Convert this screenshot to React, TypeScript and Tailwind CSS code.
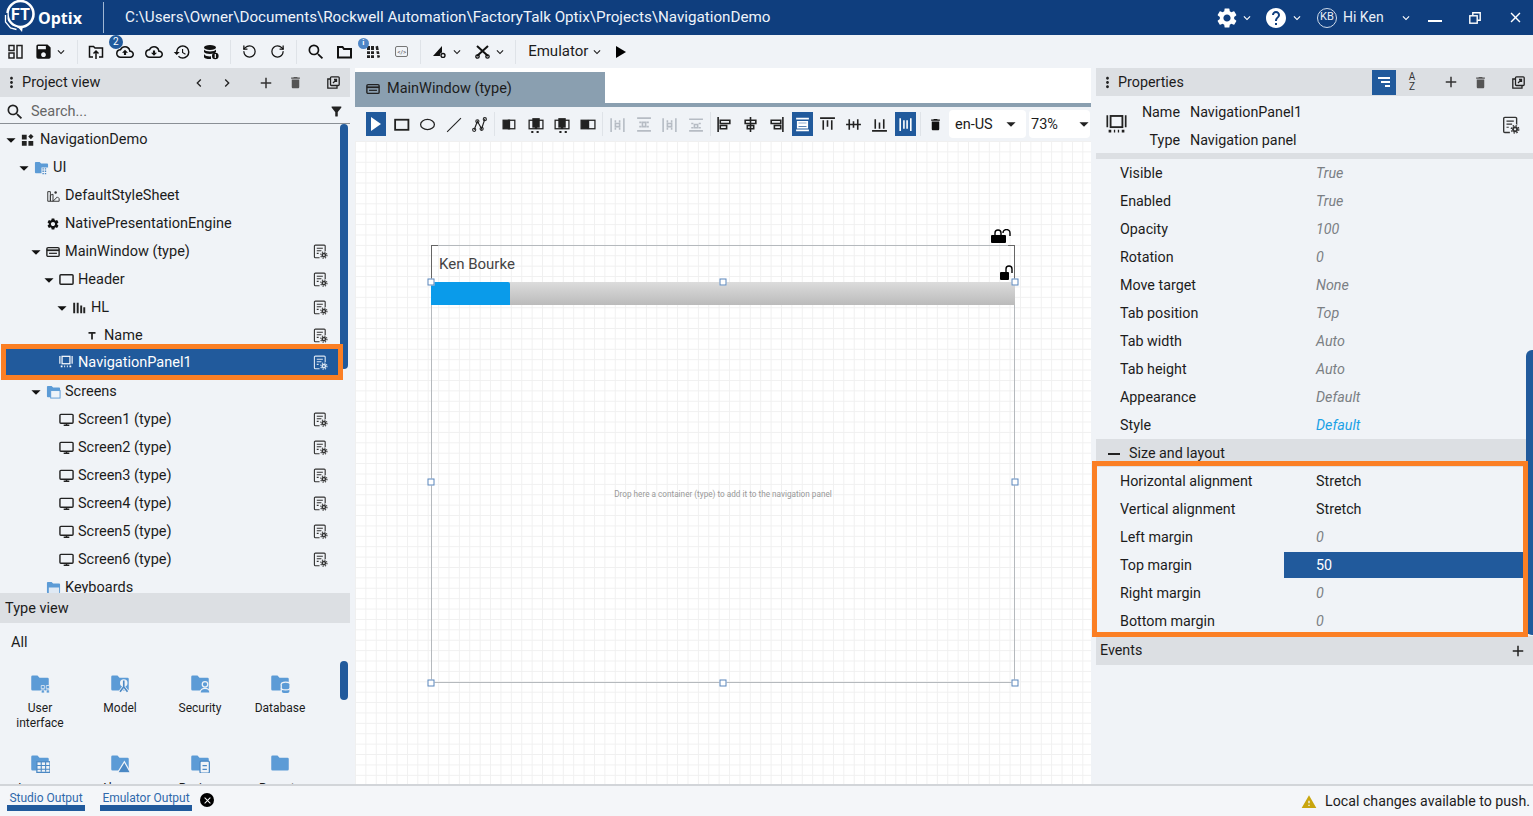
import React from "react";
import {
  MdSettings, MdHelp, MdSave, MdSearch, MdFilterAlt, MdAdd, MdClose,
  MdMoreVert, MdArrowDropDown, MdKeyboardArrowDown, MdChevronLeft, MdChevronRight, MdWarning,
  MdOutlineCloudUpload, MdOutlineCloudDownload, MdHistory, MdDelete,
} from "react-icons/md";
import { RotateCcw, RotateCw } from "lucide-react";

type P = { c?: string; s?: number };

const Svg = ({ s = 16, c = "#222", children, vb = "0 0 16 16" }: P & { children: React.ReactNode; vb?: string }) => (
  <svg width={s} height={s} viewBox={vb} fill="none" stroke={c} className="shrink-0">{children}</svg>
);

const Gear = ({ x, y, c, bg }: { x: number; y: number; c: string; bg: string }) => (
  <g>
    <circle cx={x} cy={y} r={4.4} fill={bg} stroke="none" />
    <circle cx={x} cy={y} r={2.6} fill={c} stroke="none" />
    <circle cx={x} cy={y} r={3.3} fill="none" stroke={c} strokeWidth="1.2" strokeDasharray="1.3 1.3" />
    <circle cx={x} cy={y} r={1} fill={bg} stroke="none" />
  </g>
);

const DocGear = ({ c = "#333", bg = "#f0f3f7", s = 15 }: P & { bg?: string }) => (
  <Svg s={s} c={c}>
    <path d="M13 8V2.2a1 1 0 0 0-1-1H2.500a1 1 0 0 0-1 1v11.500a1 1 0 0 0 1 1H7" strokeWidth="1.200" />
    <path d="M4 4.500h6.500M4 7.200h5M4 10h2" strokeWidth="1.100" />
    <Gear x={11.6} y={11.8} c={c} bg={bg} />
  </Svg>
);

const NavPanelIcon = ({ c = "#222", s = 14 }: P) => (
  <Svg s={s} c={c}>
    <rect x="3.500" y="1.500" width="9" height="8.500" strokeWidth="1.400" />
    <path d="M1 1v9M15 1v9" strokeWidth="1.300" />
    <path d="M2 13h2M6 13h1M9 13h1M12 13h2" strokeWidth="2" />
  </Svg>
);

const WindowIcon = ({ s = 14 }: P) => (
  <Svg s={s}>
    <rect x="1" y="3" width="14" height="10" rx="1.400" strokeWidth="1.600" />
    <path d="M1 6h14" strokeWidth="2" />
    <path d="M3.500 9.500h9" strokeWidth="1.400" />
  </Svg>
);

const Folder = ({ s = 16, children }: { s?: number; children?: React.ReactNode }) => (
  <Svg s={s}>
    <path d="M1 3a1 1 0 0 1 1-1h4l1.600 1.800H14a1 1 0 0 1 1 1V13a1 1 0 0 1-1 1H2a1 1 0 0 1-1-1Z" fill="#5c9bd6" stroke="none" />
    {children}
  </Svg>
);

const Caret = () => <span className="w-3 h-3 flex items-center justify-center mr-1 shrink-0"><MdArrowDropDown size={22} color="#111" className="shrink-0" /></span>;
const NoCaret = () => <span className="w-3 h-3 mr-1 shrink-0" />;

const treeIcons: Record<string, React.ReactNode> = {
  project: <Svg s={14}><path d="M1 2h5.500v5.500H1ZM1 9h5.500v5.500H1ZM8.500 9H14v5.500H8.500Z" fill="#222" stroke="none" /><path d="M11.300 1l3 3-3 3-3-3Z" fill="#222" stroke="none" /></Svg>,
  ui: <Folder s={15}><rect x="8" y="8" width="7.500" height="7.500" fill="#f0f3f7" stroke="none" /><path d="M9 9.500h1.500M11.500 9.500H13M9 12h1.500M11.500 12H13M9 14.500h1.500M11.500 14.500H13" stroke="#4b88c4" strokeWidth="1.500" /></Folder>,
  style: <Svg s={14} c="#333"><path d="M2 14V3h3v11ZM5 14V7l3-1v8ZM8 14l5-5 2 2v3Z" strokeWidth="1.100" /><circle cx="11" cy="4" r="1.400" fill="#333" stroke="none" /></Svg>,
  gear: <MdSettings size={16} color="#111" />,
  window: <WindowIcon />,
  rect: <Svg s={15}><rect x="1" y="3" width="14" height="10" rx="1" strokeWidth="1.600" /></Svg>,
  hl: <Svg s={14}><path d="M2.500 2v12M6.500 2v12M10.500 5v9M14 7v7" strokeWidth="2.200" /></Svg>,
  text: <Svg s={14}><path d="M4 4.500h8M8 4.500V12" strokeWidth="2" /></Svg>,
  nav: <NavPanelIcon c="#fff" />,
  screens: <Folder s={15}><rect x="5" y="7" width="10" height="8" fill="#eef3f9" stroke="#5c9bd6" /></Folder>,
  screen: <Svg s={15}><rect x="1" y="2.500" width="14" height="9.500" rx="1" strokeWidth="1.500" /><path d="M5 14.200h6M8 12v2" strokeWidth="1.500" /></Svg>,
  keyboards: <Folder s={15}><rect x="3" y="8" width="11" height="6" fill="#dfe9f4" stroke="none" /></Folder>,
};

const indent = ["pl-[5px]", "pl-[18px]", "pl-[30px]", "pl-[43px]", "pl-[56px]", "pl-[69px]"];

const treeRows = [
  { d: 0, caret: true, icon: "project", label: "NavigationDemo", doc: false },
  { d: 1, caret: true, icon: "ui", label: "UI", doc: false },
  { d: 2, caret: false, icon: "style", label: "DefaultStyleSheet", doc: false },
  { d: 2, caret: false, icon: "gear", label: "NativePresentationEngine", doc: false },
  { d: 2, caret: true, icon: "window", label: "MainWindow (type)", doc: true },
  { d: 3, caret: true, icon: "rect", label: "Header", doc: true },
  { d: 4, caret: true, icon: "hl", label: "HL", doc: true },
  { d: 5, caret: false, icon: "text", label: "Name", doc: true },
];
const treeRows2 = [
  { d: 2, caret: true, icon: "screens", label: "Screens", doc: false },
  { d: 3, caret: false, icon: "screen", label: "Screen1 (type)", doc: true },
  { d: 3, caret: false, icon: "screen", label: "Screen2 (type)", doc: true },
  { d: 3, caret: false, icon: "screen", label: "Screen3 (type)", doc: true },
  { d: 3, caret: false, icon: "screen", label: "Screen4 (type)", doc: true },
  { d: 3, caret: false, icon: "screen", label: "Screen5 (type)", doc: true },
  { d: 3, caret: false, icon: "screen", label: "Screen6 (type)", doc: true },
  { d: 2, caret: false, icon: "keyboards", label: "Keyboards", doc: false },
];

type Row = (typeof treeRows)[number];
const TreeRow = ({ r }: { r: Row }) => (
  <div className={`h-7 pt-[3px] flex items-center shrink-0 ${indent[r.d]}`}>
    {r.caret ? <Caret /> : <NoCaret />}
    <span className="w-[14px] mr-[5px] flex justify-center shrink-0">{treeIcons[r.icon]}</span>
    <span className="whitespace-nowrap pt-px">{r.label}</span>
    {r.doc && <span className="ml-auto mr-[22px]"><DocGear /></span>}
  </div>
);

const Sep = ({ cls }: { cls: string }) => <span className={`w-px h-6 bg-[#dfe3e8] shrink-0 ${cls}`} />;

const TB = ({ w, cls = "", children }: { w: string; cls?: string; children: React.ReactNode }) => (
  <span className={`flex items-center justify-center shrink-0 ${w} ${cls}`}>{children}</span>
);

const Chev = ({ c = "#222" }: { c?: string }) => <MdKeyboardArrowDown size={14} color={c} className="shrink-0" />;

/* ---- design toolbar icons ---- */
const Stack = ({ v }: { v: number }) => (
  <Svg s={17}>
    <rect x={v === 0 ? 7 : 2} y="4" width="6" height="8" fill={v === 3 ? "#222" : "#f0f3f7"} strokeWidth="1.200" />
    <rect x={v === 0 ? 2 : 9} y="4" width="6" height="8" fill={v === 0 ? "#222" : "#f0f3f7"} strokeWidth="1.200" />
    {(v === 1 || v === 2) && <path d={v === 1 ? "M4 15h2M9 15h2" : "M6 15h2M11 15h2"} strokeWidth="2" />}
    {(v === 1 || v === 2) && <rect x="5" y="2" width="7" height="9" fill="#222" stroke="none" />}
  </Svg>
);
const Dist = ({ d }: { d: string }) => (
  <Svg s={17} c="#b6bcc4"><path d={d} strokeWidth="1.500" /></Svg>
);
const Align = ({ d, c = "#222" }: { d: string; c?: string }) => (
  <Svg s={17} c={c}><path d={d} strokeWidth="1.500" /></Svg>
);

const designA = [
  <Svg s={17} key="r"><rect x="2" y="3.500" width="12.500" height="9.500" strokeWidth="1.700" /></Svg>,
  <Svg s={17} key="e"><ellipse cx="8" cy="8" rx="6.500" ry="4.800" strokeWidth="1.200" /></Svg>,
  <Svg s={17} key="l"><path d="M2 15 15 2" strokeWidth="1" /></Svg>,
  <Svg s={17} key="p"><path d="M3 13 6 5l4 7 3-9" strokeWidth="1.100" /><circle cx="3" cy="13" r="1.500" strokeWidth="1" /><circle cx="6" cy="5" r="1.500" strokeWidth="1" /><circle cx="10" cy="12" r="1.500" strokeWidth="1" /><circle cx="13" cy="3" r="1.500" strokeWidth="1" /></Svg>,
];
const designB = [0, 1, 2, 3].map((v) => <Stack v={v} key={v} />);
const designC = [
  "M2 2v13M14 2v13M6 4v2M10 4v2M6 11v2M10 11v2M6 7h4v3H6Z",
  "M2 2h13M2 14h13M4 6h2M11 6h2M4 10h2M11 10h2M7 6h3v4H7Z",
  "M2 2v13M14 2v13M6 4v2M10 4v2M6 11v2M10 11v2M6 7h4v3H6Z",
  "M2 3h13M2 14h13M4 7h2M11 7h2M4 11h2M11 11h2M7 8h3v3H7Z",
].map((d, i) => <Dist d={d} key={i} />);
const designD: { d: string; on?: boolean }[] = [
  { d: "M2 1v14M4 4h9v3H4ZM4 9h6v3H4Z" },
  { d: "M8 1v14M3 4h10v3H3ZM5 9h6v3H5Z" },
  { d: "M14 1v14M3 4h9v3H3ZM6 9h6v3H6Z" },
  { d: "M2 2.500h12M2 13.500h12M3.500 5.500h9v2h-9ZM3.500 9h9v2h-9Z", on: true },
  { d: "M1 2h14M4 4v9M8 4v6M12 4v9" },
  { d: "M1 8h14M4 3v10M8 5v6M12 3v10" },
  { d: "M1 14h14M4 3v9M8 6v6M12 3v9" },
  { d: "M3 2v12M13 2v12M6.500 4v8M9.500 4v8", on: true },
];

const SelectBox = ({ cls, caretCls, label }: { cls: string; caretCls: string; label: string }) => (
  <span className={`h-7 bg-white rounded-sm flex items-center shrink-0 ${cls}`}>
    <span className="pt-[2px]">{label}</span>
    <MdArrowDropDown size={22} color="#222" className={`ml-auto shrink-0 ${caretCls}`} />
  </span>
);

const propsA: { l: string; v: string; link?: boolean }[] = [
  { l: "Visible", v: "True" }, { l: "Enabled", v: "True" }, { l: "Opacity", v: "100" }, { l: "Rotation", v: "0" },
  { l: "Move target", v: "None" }, { l: "Tab position", v: "Top" }, { l: "Tab width", v: "Auto" }, { l: "Tab height", v: "Auto" },
  { l: "Appearance", v: "Default" }, { l: "Style", v: "Default", link: true },
];
const propsB: { l: string; v: string; plain?: boolean; sel?: boolean }[] = [
  { l: "Horizontal alignment", v: "Stretch", plain: true }, { l: "Vertical alignment", v: "Stretch", plain: true },
  { l: "Left margin", v: "0" }, { l: "Top margin", v: "50", sel: true }, { l: "Right margin", v: "0" }, { l: "Bottom margin", v: "0" },
];

const types: { a: string[]; icon: React.ReactNode }[] = [
  { a: ["User", "interface"], icon: <Folder s={20}><path d="M9 10h2.500v2.500H9ZM13 10h2.500v2.500H13ZM9 13.500h2.500V16H9ZM13 13.500h2.500V16H13Z" fill="#5c9bd6" stroke="#f0f3f7" strokeWidth=".6" /></Folder> },
  { a: ["Model"], icon: <Folder s={20}><circle cx="11" cy="8" r="3" fill="#f0f3f7" stroke="none" /><path d="M11 6v5M8 15l3-4 3 4" stroke="#f0f3f7" strokeWidth="2.400" /><path d="M11 6v5M8 15l3-4 3 4" stroke="#4b88c4" strokeWidth="1.300" /></Folder> },
  { a: ["Security"], icon: <Folder s={20}><circle cx="12" cy="9" r="2.200" fill="#5c9bd6" stroke="#f0f3f7" /><path d="M8 16c0-5 8-5 8 0Z" fill="#5c9bd6" stroke="#f0f3f7" /></Folder> },
  { a: ["Database"], icon: <Folder s={20}><ellipse cx="12.500" cy="9" rx="3.500" ry="1.800" fill="#5c9bd6" stroke="#f0f3f7" /><path d="M9 9v6c0 2 7 2 7 0V9" fill="#5c9bd6" stroke="#f0f3f7" /><path d="M9 12c0 2 7 2 7 0" stroke="#f0f3f7" /></Folder> },
  { a: ["Loggers"], icon: <Folder s={20}><rect x="5.500" y="7" width="10.500" height="8.500" fill="#f0f3f7" stroke="#4b88c4" /><path d="M5.500 10h10.500M5.500 13h10.500M9 7v8M12.500 7v8" stroke="#4b88c4" strokeWidth=".9" /></Folder> },
  { a: ["Alarms"], icon: <Folder s={20}><path d="M6 15.800 11.500 7l5 8.800Z" fill="#4b88c4" stroke="#f0f3f7" /></Folder> },
  { a: ["Recipes"], icon: <Folder s={20}><rect x="8" y="6.500" width="7.500" height="9.500" rx="1" fill="#f0f3f7" stroke="#4b88c4" /><path d="M10 10h3.500M10 13h3.500" stroke="#4b88c4" /></Folder> },
  { a: ["Reports"], icon: <Folder s={20} /> },
];

const Handle = ({ cls }: { cls: string }) => (
  <span className={`absolute w-[7px] h-[7px] bg-white border border-[#5a86bb] -translate-x-1/2 -translate-y-1/2 ${cls}`} />
);

const Lock = ({ wide, cls }: { wide?: boolean; cls: string }) => (
  <svg width={wide ? 21 : 14} height={wide ? 14 : 16} viewBox={wide ? "0 0 21 14" : "0 0 14 16"} className={`absolute ${cls}`}>
    {wide ? (
      <g><rect x="0" y="6" width="15" height="8" rx="1" fill="#000" /><path d="M4 6V4a3 3 0 0 1 6 0v2M12 4a3 3 0 0 1 7 0v3" fill="none" stroke="#000" strokeWidth="1.400" /></g>
    ) : (
      <g><rect x="0" y="7" width="9" height="8" rx="1" fill="#000" /><path d="M6 7V4a3 3 0 0 1 6 0v4" fill="none" stroke="#000" strokeWidth="1.400" /></g>
    )}
  </svg>
);

const Popout = ({ cls }: { cls: string }) => (
  <svg width="13" height="13" viewBox="0 0 13 13" fill="none" stroke="#222" strokeWidth="1.300" className={`shrink-0 ${cls}`}><rect x="3.500" y=".8" width="8.700" height="8.700" rx="1" /><path d="M3 3H.8v9.200H10V10" /><path d="M6 7l3.500-3.500M7 3.500h2.500V6" /></svg>
);

export default function App() {
  return (
    <div className="w-[1533px] h-[816px] overflow-hidden flex flex-col bg-[#f0f3f7] text-[#1c1c1c] text-[14.5px] font-[family-name:Roboto,sans-serif]">
      {/* Title bar */}
      <header className="h-[35px] shrink-0 bg-[#0f3e7e] text-white flex items-center">
        <svg width="34" height="35" viewBox="0 0 34 35" className="ml-[4px] shrink-0">
          <circle cx="16.500" cy="14" r="13" fill="none" stroke="#fff" strokeWidth="2.600" />
          <path d="M13 26l6 0-1 6Z" fill="#fff" />
          <path d="M2 13v8l5 6 6 2" fill="none" stroke="#0f3e7e" strokeWidth="3" />
          <path d="M1.500 15v7l5 6 6 1.500" fill="none" stroke="#fff" strokeWidth="1.300" />
          <text x="16.500" y="20" textAnchor="middle" fontSize="16" fontWeight="700" fill="#fff" fontFamily="Roboto, sans-serif">FT</text>
        </svg>
        <span className="w-[43px] text-[16px] font-bold font-[family-name:'Open_Sans',sans-serif]">Optix</span>
        <span className="ml-[22px] w-px h-[31px] bg-[#9fb6d3] shrink-0" />
        <span className="ml-[21px] text-[15.200px] text-[#eef3fa] whitespace-nowrap">C:\Users\Owner\Documents\Rockwell Automation\FactoryTalk Optix\Projects\NavigationDemo</span>
        <div className="ml-auto flex items-center text-[#e8eef6]">
          <MdSettings size={24} color="#fff" />
          <span className="ml-px"><Chev c="#fff" /></span>
          <span className="ml-[10px]"><MdHelp size={24} color="#fff" /></span>
          <span className="ml-[2px]"><Chev c="#fff" /></span>
          <span className="ml-[13px] w-[20px] h-[20px] rounded-full border border-[#cfdbea] flex items-center justify-center text-[11px]">KB</span>
          <span className="ml-[6px] text-[14px] w-[56px]">Hi Ken</span>
          <Chev c="#fff" />
          <span className="ml-[15px] w-[14px] h-[2px] bg-white mt-[7px]" />
          <span className="ml-[27px]">
            <svg width="12" height="12" viewBox="0 0 12 12" fill="none" stroke="#fff" strokeWidth="1.400" className="block"><rect x=".8" y="3.800" width="7.400" height="7.400" /><path d="M3.800 3.500V.8h7.400v7.400H8.500" /></svg>
          </span>
          <span className="ml-[26px] mr-[9px]"><MdClose size={17} color="#fff" /></span>
        </div>
      </header>

      {/* Main toolbar */}
      <div className="h-[33px] shrink-0 flex items-center">
        <TB w="w-[30px]"><svg width="15" height="15" viewBox="0 0 15 15" fill="none" stroke="#222" strokeWidth="1.500"><rect x="1" y="1.500" width="5" height="5" /><rect x="1" y="9" width="5" height="5" /><rect x="9" y="1.500" width="5" height="12.500" /></svg></TB>
        <TB w="w-[27px]"><MdSave size={19} color="#111" /></TB>
        <TB w="w-[8px]"><Chev /></TB>
        <Sep cls="ml-[12px]" />
        <TB w="w-[28.700px]" cls="ml-[4px]"><svg width="16" height="16" viewBox="0 0 16 16" fill="none" stroke="#111" strokeWidth="1.500"><path d="M5 13H1.500V2.500h4L7 4h7.500v9H11" /><path d="M8 15V7M5.500 9.500 8 7l2.500 2.500" /></svg></TB>
        <TB w="w-[28.700px]" cls="relative">
          <MdOutlineCloudUpload size={18} color="#111" />
          <span className="absolute -top-[8px] -left-[2px] w-[14px] h-[14px] rounded-full bg-[#215a9c] text-white text-[10px] flex items-center justify-center">2</span>
        </TB>
        <TB w="w-[28.700px]"><MdOutlineCloudDownload size={18} color="#111" /></TB>
        <TB w="w-[28.700px]"><MdHistory size={18} color="#111" /></TB>
        <TB w="w-[28.700px]"><svg width="16" height="16" viewBox="0 0 16 16"><ellipse cx="7" cy="3.500" rx="6" ry="2.500" fill="#111" /><path d="M1 5.500c1 2.500 11 2.500 12 0v2.500c-1 2.500-11 2.500-12 0ZM1 10c1 2.500 6 2.500 7 2.300V15c-3 .3-7-.5-7-2Z" fill="#111" /><circle cx="12.300" cy="12" r="3.300" fill="#111" /><path d="M12.300 10v4" stroke="#fff" strokeWidth="1.200" /></svg></TB>
        <Sep cls="ml-[5px]" />
        <TB w="w-[28px]" cls="ml-[4px]"><RotateCcw size={15} color="#111" strokeWidth={2} /></TB>
        <TB w="w-[28px]"><RotateCw size={15} color="#111" strokeWidth={2} /></TB>
        <Sep cls="ml-[5px]" />
        <TB w="w-[28.700px]" cls="ml-[4px]"><MdSearch size={20} color="#111" /></TB>
        <TB w="w-[28.700px]"><svg width="15" height="14" viewBox="0 0 15 14" fill="none" stroke="#111" strokeWidth="2"><path d="M1 12.500V2h4.500l1.500 2H14v8.500Z" /></svg></TB>
        <TB w="w-[28.700px]" cls="relative">
          <svg width="14" height="14" viewBox="0 0 14 14" fill="#222"><path d="M1 1h3v12H1ZM5 1h3v12H5ZM9.500 1.500l2.500-.7 2 11.500-2.500.7Z" /><path d="M0 5h14v1.200H0ZM0 9h14v1.200H0Z" fill="#f0f3f7" /></svg>
          <span className="absolute -top-[7px] -left-[1px] w-[11px] h-[11px] rounded-full bg-[#4f86c6] text-white text-[8px] font-bold flex items-center justify-center">i</span>
        </TB>
        <TB w="w-[28.700px]"><span className="w-[13px] h-[11px] border border-[#777] rounded-[2px] text-[6px] leading-[9px] text-center text-[#444]">&lt;/&gt;</span></TB>
        <Sep cls="ml-[4px]" />
        <TB w="w-[20px]" cls="ml-[8px]"><svg width="13" height="13" viewBox="0 0 13 13"><path d="M0 11 9 1v6.500a3 3 0 0 0-2 3.500Z" fill="#111" /><circle cx="10" cy="10.500" r="2" fill="none" stroke="#111" strokeWidth="1.400" /></svg></TB>
        <TB w="w-[10px]" cls="ml-[3px]"><Chev /></TB>
        <TB w="w-[20px]" cls="ml-[10px]"><svg width="15" height="15" viewBox="0 0 15 15" fill="none" stroke="#111" strokeWidth="2"><path d="M2 2l11 10M13 2 2 12" /><circle cx="2.500" cy="12.500" r="1.700" strokeWidth="1.300" /><circle cx="12.500" cy="12.500" r="1.700" strokeWidth="1.300" /></svg></TB>
        <TB w="w-[10px]" cls="ml-[3px]"><Chev /></TB>
        <Sep cls="ml-[10px]" />
        <span className="ml-[12px] w-[58px] whitespace-nowrap text-[15px]">Emulator</span>
        <TB w="w-[12px]" cls="ml-[5px]"><Chev /></TB>
        <TB w="w-[16px]" cls="ml-[10px]"><svg width="12" height="14" viewBox="0 0 12 14"><path d="M1 1l10 6-10 6Z" fill="#000" /></svg></TB>
      </div>

      <div className="flex-1 flex min-h-0">
        {/* Left column */}
        <aside className="w-[350px] shrink-0 flex flex-col min-h-0">
          <div className="h-[29px] shrink-0 bg-[#dcdfe3] flex items-center">
            <MdMoreVert size={17} color="#222" className="ml-[3px] shrink-0" />
            <span className="ml-[2px] w-[78px] whitespace-nowrap">Project view</span>
            <MdChevronLeft size={16} color="#222" className="ml-[91px] shrink-0" />
            <MdChevronRight size={16} color="#222" className="ml-[12px] shrink-0" />
            <MdAdd size={18} color="#333" className="ml-[22px] shrink-0" />
            <MdDelete size={15} color="#555" className="ml-[12.500px] shrink-0" />
            <Popout cls="ml-[24px]" />
          </div>
          <div className="h-[27px] pt-[3px] shrink-0 flex items-center border-b border-[#8a8f95]">
            <MdSearch size={20} color="#222" className="ml-[5px]" />
            <span className="ml-[6px] text-[#666]">Search...</span>
            <MdFilterAlt size={15} color="#222" className="ml-auto mr-[6px]" />
          </div>
          <div className="relative h-[469px] shrink-0 overflow-hidden flex flex-col">
            {treeRows.map((r) => <TreeRow key={r.label} r={r} />)}
            <div className="relative z-10 -my-1 ml-px w-[342px] h-9 shrink-0 border-[5px] border-[#fb7f24] bg-[#215a9c] text-white flex items-center pl-[37px]">
              <span className="w-3 mr-1 shrink-0" />
              <span className="w-[14px] mr-[5px] flex justify-center shrink-0">{treeIcons.nav}</span>
              <span className="pt-[2px]">NavigationPanel1</span>
              <span className="ml-auto mr-[10px]"><DocGear c="#dbe6f2" bg="#215a9c" /></span>
            </div>
            {treeRows2.map((r) => <TreeRow key={r.label} r={r} />)}
            <span className="absolute left-[340px] top-0 w-2 h-[245px] rounded-full bg-[#215a9c]" />
          </div>
          <div className="h-[30px] pt-[2px] shrink-0 bg-[#dcdfe3] flex items-center pl-[5px]">Type view</div>
          <div className="relative flex-1 min-h-0 overflow-hidden">
            <div className="pl-[11px] pt-[11px] h-[29px] leading-[18px]">All</div>
            <div className="grid grid-cols-[80px_80px_80px_80px] mt-[21px]">
              {types.map((t) => (
                <div key={t.a[0]} className="h-[80px] flex flex-col items-center text-[12px] leading-[15px] text-center">
                  <span className="h-[20px] mb-[8px]">{t.icon}</span>
                  {t.a.map((x) => <span key={x}>{x}</span>)}
                </div>
              ))}
            </div>
            <span className="absolute left-[340px] top-[38px] w-2 h-[39px] rounded-full bg-[#215a9c]" />
          </div>
        </aside>

        {/* Center */}
        <main className="ml-[5px] w-[736px] shrink-0 flex flex-col min-h-0">
          <div className="h-[39px] shrink-0 bg-white pt-[4px] border-b-4 border-[#8a9fb0] flex">
            <div className="w-[250px] bg-[#8a9fb0] flex items-center pl-[11px] pb-[2px] -mb-[4px]">
              <WindowIcon />
              <span className="ml-[7px]">MainWindow (type)</span>
            </div>
          </div>
          <div className="h-[34px] shrink-0 flex items-center">
            <span className="ml-[11px] w-[20px] h-6 bg-[#215a9c] flex items-center justify-center shrink-0"><svg width="12" height="14" viewBox="0 0 12 14"><path d="M1 0l10 7-10 7Z" fill="#fff" /></svg></span>
            <div className="ml-[2px] flex">{designA.map((x, i) => <TB w="w-[26px]" key={i}>{x}</TB>)}</div>
            <Sep cls="ml-[2px]" />
            <div className="ml-px flex">{designB.map((x, i) => <TB w="w-[26px]" key={i}>{x}</TB>)}</div>
            <Sep cls="ml-[2px]" />
            <div className="ml-px flex">{designC.map((x, i) => <TB w="w-[26px]" key={i}>{x}</TB>)}</div>
            <Sep cls="ml-[2px]" />
            <div className="ml-px flex">
              {designD.map((x, i) => (
                <TB w="w-[25.750px]" key={i}>
                  {x.on ? <span className="w-[21px] h-6 bg-[#215a9c] flex items-center justify-center"><Align d={x.d} c="#fff" /></span> : <Align d={x.d} />}
                </TB>
              ))}
            </div>
            <Sep cls="ml-[2px]" />
            <TB w="w-[26px]" cls="ml-px"><MdDelete size={15} color="#111" /></TB>
            <SelectBox cls="ml-px w-[77px] pl-[6px]" caretCls="mr-[4px]" label="en-US" />
            <SelectBox cls="ml-[3px] w-[61px] pl-[2px]" caretCls="-mr-[5px]" label="73%" />
          </div>
          <div className="relative flex-1 min-h-0 overflow-hidden bg-white bg-[linear-gradient(#f0f0f0_1px,transparent_1px),linear-gradient(90deg,#f0f0f0_1px,transparent_1px)] bg-[size:10.400px_10.400px]">
            {/* free canvas, origin at (355,141) */}
            <div className="absolute left-[76px] top-[104px] w-[584px] h-[438px] border border-[#b5b9bd]" />
            <div className="absolute left-[76px] top-[104px] w-[7px] h-[37px] border-l border-t border-[#666]" />
            <div className="absolute left-[653px] top-[104px] w-[7px] h-[37px] border-r border-t border-[#666]" />
            <div className="absolute left-[84px] top-[112px] text-[15px] text-[#444]">Ken Bourke</div>
            <div className="absolute left-[76px] top-[141px] w-[584px] h-[23px] bg-[linear-gradient(#dcdcdc,#bbbbbb)]">
              <div className="w-[79px] h-full bg-[#0a9bea] rounded-tr-[2px]" />
            </div>
            <div className="absolute left-[76px] w-[584px] top-[347px] text-center text-[8.200px] leading-3 text-[#999]">Drop here a container (type) to add it to the navigation panel</div>
            <Lock wide cls="left-[636px] top-[88px]" />
            <Lock cls="left-[645px] top-[124px]" />
            <Handle cls="left-[76px] top-[141px]" />
            <Handle cls="left-[368px] top-[141px]" />
            <Handle cls="left-[660px] top-[141px]" />
            <Handle cls="left-[76px] top-[341px]" />
            <Handle cls="left-[660px] top-[341px]" />
            <Handle cls="left-[76px] top-[542px]" />
            <Handle cls="left-[368px] top-[542px]" />
            <Handle cls="left-[660px] top-[542px]" />
          </div>
        </main>

        {/* Properties */}
        <aside className="relative ml-[5px] w-[437px] shrink-0 flex flex-col min-h-0 text-[14.300px]">
          <div className="h-[28px] shrink-0 bg-[#dcdfe3] flex items-center">
            <MdMoreVert size={17} color="#222" className="ml-[3px] shrink-0" />
            <span className="ml-[2px] w-[66px] pt-[2px]">Properties</span>
            <span className="ml-[188px] w-6 h-[25px] bg-[#215a9c] flex items-center justify-center">
              <svg width="14" height="12" viewBox="0 0 14 12" stroke="#fff" strokeWidth="2"><path d="M1 2h12M4 6h9M8 10h5" /></svg>
            </span>
            <span className="ml-[9px] w-[14px] text-[10px] leading-[10px] text-[#333] text-center">A<br />Z</span>
            <MdAdd size={18} color="#333" className="ml-[23px] shrink-0" />
            <MdDelete size={15} color="#555" className="ml-[13px] shrink-0" />
            <Popout cls="ml-[24px]" />
          </div>
          <div className="h-[57px] shrink-0 flex items-center">
            <span className="ml-[10px] w-[21px]"><NavPanelIcon s={21} /></span>
            <div className="ml-[14px] flex flex-col pt-[5px]">
              <div className="h-7 flex items-center"><span className="w-[39px] text-right">Name</span><span className="ml-[10px]">NavigationPanel1</span></div>
              <div className="h-7 flex items-center"><span className="w-[39px] text-right">Type</span><span className="ml-[10px]">Navigation panel</span></div>
            </div>
            <span className="ml-auto mr-[13px]"><DocGear s={18} /></span>
          </div>
          <div className="h-[6px] shrink-0 bg-[#dcdfe3]" />
          {propsA.map((p) => (
            <div key={p.l} className="h-7 pt-[2px] shrink-0 flex items-center pl-[24px]">
              <span className="w-[196px]">{p.l}</span>
              <span className={`italic ${p.link ? "text-[#1ba1e6]" : "text-[#7b7f84]"}`}>{p.v}</span>
            </div>
          ))}
          <div className="h-7 pt-[2px] shrink-0 bg-[#dcdfe3] flex items-center">
            <span className="ml-[12px] w-3 h-[2px] bg-[#222]" />
            <span className="ml-[9px]">Size and layout</span>
          </div>
          <div className="relative shrink-0 mr-[10px]">
            {propsB.map((p) => (
              <div key={p.l} className="h-7 flex items-center pl-[24px]">
                <span className="w-[164px] shrink-0 pt-[2px]">{p.l}</span>
                <span className={`flex-1 self-stretch flex items-center pt-[2px] pl-[32px] ${p.sel ? "bg-[#215a9c] text-white my-px" : p.plain ? "" : "italic text-[#7b7f84]"}`}>{p.v}</span>
              </div>
            ))}
            <div className="absolute -left-1 -top-[6px] -right-[5px] -bottom-[2px] border-[5px] border-[#fb7f24] z-10 pointer-events-none" />
          </div>
          <div className="mt-px h-[29px] shrink-0 bg-[#dcdfe3] flex items-center pl-[4px]">
            <span>Events</span>
            <MdAdd size={18} color="#222" className="ml-auto mr-[6px]" />
          </div>
          <span className="absolute right-0 top-[282px] w-[7px] h-[285px] rounded-l-md bg-[#215a9c]" />
        </aside>
      </div>

      {/* Status bar */}
      <footer className="h-[32px] shrink-0 border-t-2 border-[#d2d5d9] flex items-start bg-[#f4f6f9]">
        <div className="ml-[7px] w-[78px] mt-[5px] flex flex-col items-center text-[12px] leading-[14px] text-[#2f68ab]">
          <span>Studio Output</span>
          <span className="w-full h-[6px] bg-[#215a9c]" />
        </div>
        <div className="ml-[15px] w-[92px] mt-[5px] flex flex-col items-center text-[12px] leading-[14px] text-[#2f68ab]">
          <span>Emulator Output</span>
          <span className="w-full h-[6px] bg-[#215a9c]" />
        </div>
        <span className="ml-[8px] mt-[7px] w-[14px] h-[14px] rounded-full bg-black flex items-center justify-center"><MdClose size={11} color="#fff" /></span>
        <span className="ml-auto mt-[7px] flex items-center mr-[3px] text-[14.200px] leading-[17px]">
          <MdWarning size={16} color="#c9a60e" />
          <span className="ml-[8px]">Local changes available to push.</span>
        </span>
      </footer>
    </div>
  );
}
